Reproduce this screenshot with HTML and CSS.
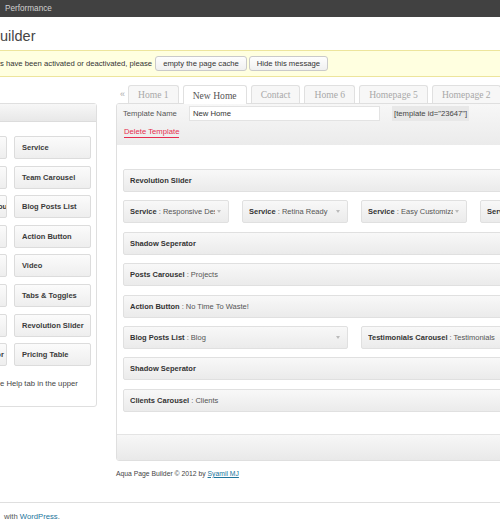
FILE: index.html
```html
<!DOCTYPE html>
<html>
<head>
<meta charset="utf-8">
<title>Aqua Page Builder</title>
<link rel="stylesheet" href="styles.css">
</head>
<body>
<div class="adminbar"><span>Performance</span></div>
<div class="wrap">
  <h2 class="page-title">uilder</h2>
  <div class="notice">
    <span class="notice-text">s have been activated or deactivated, please</span>
    <span class="btn">empty the page cache</span>
    <span class="btn">Hide this message</span>
  </div>
  <div class="builder">
    <aside class="sidebar">
      <div class="sidebar-head"></div>
      <div class="sb-grid">
        <div class="sb-block">Portfolio</div><div class="sb-block">Service</div>
        <div class="sb-block">Clients Carousel</div><div class="sb-block">Team Carousel</div>
        <div class="sb-block">Testimonials Carousel</div><div class="sb-block">Blog Posts List</div>
        <div class="sb-block">Column</div><div class="sb-block">Action Button</div>
        <div class="sb-block">Text</div><div class="sb-block">Video</div>
        <div class="sb-block">Image</div><div class="sb-block">Tabs &amp; Toggles</div>
        <div class="sb-block">Widgets</div><div class="sb-block">Revolution Slider</div>
        <div class="sb-block">Shadow Seperator</div><div class="sb-block">Pricing Table</div>
      </div>
      <p class="help">e Help tab in the upper</p>
    </aside>
    <section class="main">
      <nav class="tabs">
        <span class="tabs-prev">«</span>
        <span class="tab">Home 1</span>
        <span class="tab active">New Home</span>
        <span class="tab">Contact</span>
        <span class="tab">Home 6</span>
        <span class="tab">Homepage 5</span>
        <span class="tab">Homepage 2</span>
      </nav>
      <div class="panel">
        <div class="template-bar">
          <div class="template-row">
            <label class="template-label">Template Name</label>
            <span class="template-input">New Home</span>
            <span class="template-code">[template id="23647"]</span>
          </div>
          <a class="delete-link">Delete Template</a>
        </div>
        <div class="canvas">
          <div class="block full"><span class="block-title"><b>Revolution Slider</b></span><span class="caret"></span></div>
          <div class="block quarter"><span class="block-title"><b>Service</b> : Responsive Design</span><span class="caret"></span></div>
          <div class="block quarter"><span class="block-title"><b>Service</b> : Retina Ready</span><span class="caret"></span></div>
          <div class="block quarter"><span class="block-title"><b>Service</b> : Easy Customization</span><span class="caret"></span></div>
          <div class="block quarter"><span class="block-title"><b>Service</b> : Fully Responsive</span><span class="caret"></span></div>
          <div class="block full"><span class="block-title"><b>Shadow Seperator</b></span><span class="caret"></span></div>
          <div class="block full"><span class="block-title"><b>Posts Carousel</b> : Projects</span><span class="caret"></span></div>
          <div class="block full"><span class="block-title"><b>Action Button</b> : No Time To Waste!</span><span class="caret"></span></div>
          <div class="block half"><span class="block-title"><b>Blog Posts List</b> : Blog</span><span class="caret"></span></div>
          <div class="block half"><span class="block-title"><b>Testimonials Carousel</b> : Testimonials</span><span class="caret"></span></div>
          <div class="block full"><span class="block-title"><b>Shadow Seperator</b></span><span class="caret"></span></div>
          <div class="block full"><span class="block-title"><b>Clients Carousel</b> : Clients</span><span class="caret"></span></div>
        </div>
        <div class="panel-foot"></div>
      </div>
      <p class="credit">Aqua Page Builder © 2012 by <a>Syamil MJ</a></p>
    </section>
  </div>
</div>
<footer class="wp-footer"><p>with <a>WordPress</a>.</p></footer>
</body>
</html>
```

FILE: styles.css
```css
* { box-sizing: border-box; }
html, body { margin: 0; padding: 0; }
body {
  width: 500px;
  height: 528px;
  overflow: hidden;
  background: #fff;
  font-family: "Liberation Sans", Arial, sans-serif;
  font-size: 7.7px;
  color: #333;
}
a { color: #21759b; text-decoration: none; }

.adminbar {
  height: 17px;
  background: #414141;
  color: #d0d0d0;
  font-size: 8.2px;
  display: flex;
  align-items: center;
  padding-left: 5px;
}

.page-title {
  margin: 0;
  height: 33px;
  padding-top: 5px;
  display: flex;
  align-items: center;
  font-size: 14.5px;
  font-weight: normal;
  color: #464646;
}

.notice {
  height: 27px;
  display: flex;
  align-items: center;
  gap: 2px;
  background: #ffffe0;
  border-top: 1px solid #ede59c;
  border-bottom: 1px solid #ede59c;
}
.notice-text { margin-right: 1px; }
.btn {
  height: 15px;
  display: inline-flex;
  align-items: center;
  padding: 0 7px;
  border: 1px solid #cacaca;
  border-radius: 3px;
  background: linear-gradient(#fefefe, #f0f0f0);
  color: #333;
}

.builder {
  display: flex;
  align-items: flex-start;
  margin-top: 8px;
}

.sidebar {
  flex: 0 0 174px;
  margin-left: -77px;
  margin-top: 18px;
  border: 1px solid #dfdfdf;
  border-radius: 3px;
}
.sidebar-head {
  height: 18px;
  background: linear-gradient(#f7f7f7, #e8e8e8);
  border-bottom: 1px solid #dcdcdc;
}
.sb-grid {
  display: grid;
  grid-template-columns: 77px 77px;
  column-gap: 7px;
  row-gap: 6.6px;
  padding: 14px 5px 0 6px;
}
.sb-block {
  height: 23px;
  display: flex;
  align-items: center;
  padding-left: 7px;
  border: 1px solid #dcdcdc;
  border-radius: 2px;
  background: linear-gradient(#fbfbfb, #eeeeee);
  font-weight: bold;
  font-size: 7.5px;
  color: #3a3a3a;
  white-space: nowrap;
  overflow: hidden;
}
.help {
  margin: 13px 0 0;
  padding: 0 0 18px 76px;
  line-height: 9px;
  white-space: nowrap;
  color: #444;
}

.main {
  flex: 0 0 477px;
  margin-left: 19px;
}
.tabs {
  display: flex;
  align-items: flex-end;
  height: 18px;
}
.tabs-prev {
  width: 12px;
  padding-left: 4px;
  align-self: center;
  color: #aaa;
  font-size: 9px;
}
.tab {
  height: 18px;
  margin-right: 4px;
  padding: 0 9px;
  border: 1px solid #e0e0e0;
  border-bottom: 0;
  border-radius: 3px 3px 0 0;
  background: #f7f7f7;
  font-family: "Liberation Serif", "Times New Roman", serif;
  font-size: 9.6px;
  color: #a8a8a8;
  display: flex;
  align-items: center;
  white-space: nowrap;
}
.tab.active {
  background: #fff;
  color: #555;
  height: 19px;
  margin-bottom: -1px;
  position: relative;
  z-index: 1;
}

.panel {
  border: 1px solid #dfdfdf;
  border-radius: 3px;
  overflow: hidden;
}
.template-bar {
  height: 41px;
  padding: 2px 6px 0;
  background: linear-gradient(#f7f7f7, #ebebeb);
}
.template-row {
  display: flex;
  align-items: center;
  height: 15px;
}
.template-label { width: 66px; color: #555; }
.template-input {
  width: 191px;
  height: 15px;
  display: flex;
  align-items: center;
  padding: 0 3px;
  border: 1px solid #e3e3e3;
  background: #fff;
  color: #333;
}
.template-code {
  margin-left: 12px;
  width: 77px;
  height: 15px;
  display: flex;
  align-items: center;
  padding-left: 2px;
  background: #e8e8e8;
  color: #444;
  white-space: nowrap;
  overflow: hidden;
}
.delete-link {
  display: inline-block;
  margin-top: 6px;
  margin-left: 1px;
  line-height: 9px;
  padding-bottom: 1px;
  color: #e62d4f;
  border-bottom: 1px solid #e62d4f;
}

.canvas {
  display: flex;
  flex-wrap: wrap;
  column-gap: 13px;
  row-gap: 8.4px;
  padding: 24px 6px 22px;
  background: #fff;
}
.block {
  height: 23px;
  display: flex;
  align-items: center;
  padding: 0 7px 0 6px;
  border: 1px solid #e0e0e0;
  border-radius: 2px;
  background: linear-gradient(#f8f8f8, #ebebeb);
  font-size: 7.5px;
  white-space: nowrap;
}
.block.full { width: 463px; }
.block.half { width: 225px; }
.block.quarter { width: 106px; }
.block-title {
  flex: 1;
  min-width: 0;
  overflow: hidden;
  color: #555;
}
.block-title b { color: #333; }
.caret {
  width: 0;
  height: 0;
  margin-left: 2px;
  border-left: 2.5px solid transparent;
  border-right: 2.5px solid transparent;
  border-top: 3px solid #bbb;
}

.panel-foot {
  height: 26px;
  background: linear-gradient(#f7f7f7, #e9e9e9);
  border-top: 1px solid #e4e4e4;
}

.credit {
  margin: 8px 0 0;
  font-size: 6.8px;
  line-height: 9px;
  color: #444;
}
.credit a { text-decoration: underline; }

.wp-footer {
  margin-top: 24px;
  border-top: 1px solid #dfdfdf;
  padding: 9px 0 0 4px;
}
.wp-footer p {
  margin: 0;
  line-height: 9px;
  color: #555;
}
```
